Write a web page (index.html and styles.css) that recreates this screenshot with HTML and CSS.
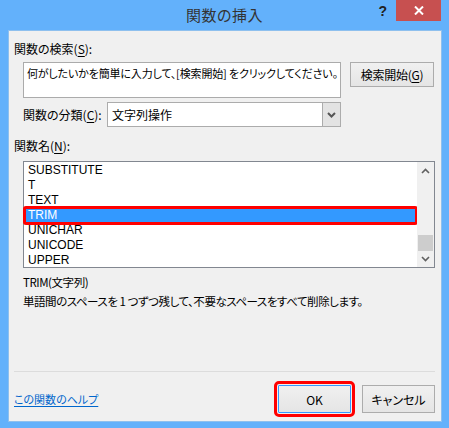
FILE: index.html
```html
<!DOCTYPE html>
<html lang="ja">
<head>
    <meta charset="UTF-8">
    <title>関数の挿入</title>
    <link rel="stylesheet" href="styles.css">
</head>
<body>
<div class="dialog">
    <div class="titlebar">
        <span></span>
        <span class="title">関数の挿入</span>
        <div class="controls">
            <span class="help">?</span>
            <span class="close">
                <svg width="10" height="9" viewBox="0 0 10 9"><path d="M1 0.5 L9 8.5 M9 0.5 L1 8.5" stroke="#fff" stroke-width="2"/></svg>
            </span>
        </div>
    </div>

    <div class="client">
        <div class="label top">関数の検索(<u>S</u>):</div>
        <div class="search-row">
            <div class="search-box">何がしたいかを簡単に入力して、[検索開始] をクリックしてください。</div>
            <button class="btn search-btn">検索開始(<u>G</u>)</button>
        </div>
        <div class="combo-row">
            <span class="combo-label">関数の分類(<u>C</u>):</span>
            <div class="combo">
                <span class="combo-text">文字列操作</span>
                <span class="combo-arrow">
                    <svg width="9" height="6" viewBox="0 0 9 6"><path d="M1 1 L4.5 4.5 L8 1" fill="none" stroke="#555" stroke-width="2"/></svg>
                </span>
            </div>
        </div>

        <div class="label names">関数名(<u>N</u>):</div>
        <div class="listbox">
            <ul class="items">
                <li>SUBSTITUTE</li>
                <li>T</li>
                <li>TEXT</li>
                <li class="selected">TRIM</li>
                <li>UNICHAR</li>
                <li>UNICODE</li>
                <li>UPPER</li>
            </ul>
            <div class="scrollbar">
                <svg class="arrow" width="9" height="6" viewBox="0 0 9 6"><path d="M1 5 L4.5 1.5 L8 5" fill="none" stroke="#606060" stroke-width="1.6"/></svg>
                <div class="track"><div class="thumb"></div></div>
                <svg class="arrow" width="9" height="6" viewBox="0 0 9 6"><path d="M1 1 L4.5 4.5 L8 1" fill="none" stroke="#606060" stroke-width="1.6"/></svg>
            </div>
        </div>

        <div class="fn-info">
            <p class="fn-syntax">TRIM(文字列)</p>
            <p class="fn-text">単語間のスペースを 1 つずつ残して、不要なスペースをすべて削除します。</p>
        </div>

        <div class="footer">
            <a href="#" class="help-link">この関数のヘルプ</a>
            <div class="buttons">
                <button class="btn ok">OK</button>
                <button class="btn cancel">キャンセル</button>
            </div>
        </div>
    </div>
</div>
</body>
</html>
```

FILE: styles.css
```css
* {
    margin: 0;
    padding: 0;
    box-sizing: border-box;
}

body {
    background-color: #63b1fb;
    font-family: "Noto Sans CJK JP", "Liberation Sans", sans-serif;
    font-size: 12px;
    color: #000;
    font-feature-settings: "palt";
}

ul {
    list-style: none
}

u {
    text-decoration: underline;
    text-underline-offset: 2px;
}

.dialog {
    width: 449px;
    height: 428px;
    display: flex;
    flex-direction: column;
}

/* タイトルバー */
.titlebar {
    height: 30px;
    display: grid;
    grid-template-columns: 1fr auto 1fr;
    align-items: start;
}

.title {
    font-size: 15px;
    line-height: 30px;
    color: #333;
    letter-spacing: 0.5px;
}

.controls {
    justify-self: end;
    display: flex;
    align-items: flex-start;
    margin-right: 8px;
}

.help {
    font-family: "Liberation Sans", sans-serif;
    font-weight: bold;
    font-size: 14px;
    color: #222;
    line-height: 22px;
    margin-right: 9px;
}

.close {
    width: 45px;
    height: 21px;
    background-color: #c75050;
    display: flex;
    align-items: center;
    justify-content: center;
}

/* 本体 */
.client {
    flex: 1;
    margin: 0 7px 6px 8px;
    background-color: #f0f0f0;
    border: 1px solid #8ec0ee;
    display: flex;
    flex-direction: column;
    align-items: flex-start;
}

.label {
    line-height: 15px;
    margin-left: 5px;
}

.label.top {
    margin-top: 10px;
}

.search-row {
    display: flex;
    align-items: flex-start;
    margin-top: 6px;
    margin-left: 14px;
}

.search-box {
    width: 318px;
    height: 36px;
    background-color: #fff;
    border: 1px solid #ababab;
    padding: 2px 3px;
    font-size: 11px;
    letter-spacing: -0.15px;
    line-height: 16px;
    white-space: nowrap;
    overflow: hidden;
}

.btn {
    font-family: inherit;
    font-size: 12px;
    font-feature-settings: "palt";
    color: #000;
    height: 25px;
    padding: 0;
    background: linear-gradient(#f0f0f0, #e5e5e5);
    border: 1px solid #acacac;
    cursor: pointer;
}

.search-btn {
    width: 84px;
    margin-left: 9px;
    letter-spacing: -0.3px;
}

.combo-row {
    display: flex;
    align-items: center;
    margin-top: 4px;
    margin-left: 14px;
}

.combo-label {
    width: 84px;
}

.combo {
    width: 234px;
    height: 25px;
    background-color: #fff;
    border: 1px solid #acacac;
    display: flex;
}

.combo-text {
    flex: 1;
    padding-left: 4px;
    line-height: 23px;
}

.combo-arrow {
    width: 18px;
    background-color: #e3e3e3;
    border-left: 1px solid #acacac;
    display: flex;
    align-items: center;
    justify-content: center;
}

.label.names {
    margin-top: 11px;
}

/* 関数名リスト */
.listbox {
    margin: 8px 0 0 14px;
    width: 412px;
    height: 107px;
    background-color: #fff;
    border: 1px solid #828790;
    display: flex;
}

.items {
    flex: 1;
    padding-top: 1px;
    font-family: "Liberation Sans", sans-serif;
}

.items li {
    height: 15px;
    line-height: 15px;
    padding-left: 3px;
    margin-left: 1px;
}

.items li.selected {
    background-color: #3399ff;
    color: #fff;
    outline: 3px solid #ff0000;
    outline-offset: -1px;
    border-radius: 1px;
    margin-right: 1px;
}

.scrollbar {
    width: 17px;
    background-color: #f0f0f0;
    display: flex;
    flex-direction: column;
    align-items: center;
    padding: 6px 0 5px;
}

.track {
    flex: 1;
    width: 100%;
    padding-top: 61px;
}

.thumb {
    height: 16px;
    margin: 0 1px;
    background-color: #cdcdcd;
}

/* 関数の説明 */
.fn-info {
    margin: 5px 0 0 14px;
}

.fn-syntax,
.fn-text {
    line-height: 19px;
    font-size: 11.5px;
    letter-spacing: -0.45px;
}

/* フッター */
.footer {
    align-self: stretch;
    margin: auto 6px 0 5px;
    border-top: 1px solid #dcdcdc;
    padding: 13px 0 8px;
    display: flex;
    align-items: center;
    justify-content: space-between;
}

.help-link {
    color: #0066cc;
    font-size: 11px;
    text-decoration: underline;
    text-underline-offset: 2px;
}

.buttons {
    display: flex;
    gap: 11px;
}

.ok, .cancel {
    width: 73px;
    height: 28px;
}

.ok {
    border-color: #3399ff;
    outline: 3px solid #ff0000;
    outline-offset: 1px;
    border-radius: 1px;
}
```
